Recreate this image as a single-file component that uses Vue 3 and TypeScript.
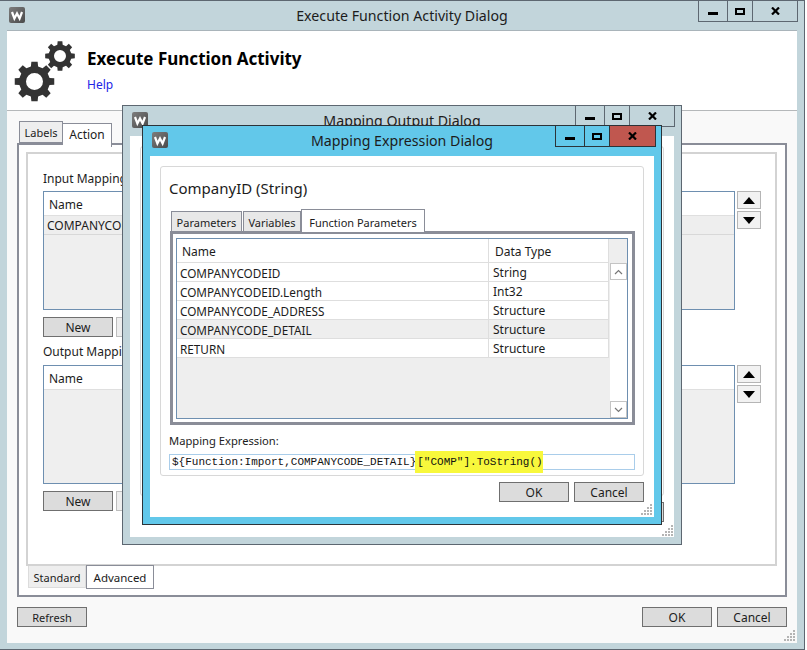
<script setup lang="ts">
function gear(cx: number, cy: number, R: number, root: number, hole: number, teeth: number): string {
  const pts: string[] = []
  const step = (Math.PI * 2) / teeth
  for (let i = 0; i < teeth; i++) {
    const a = -Math.PI / 2 + i * step
    const w = step * 0.2
    const wr = step * 0.3
    const list: [number, number][] = [
      [root, a - wr],
      [R, a - w],
      [R, a + w],
      [root, a + wr],
    ]
    for (const [r, t] of list) {
      pts.push(`${(cx + r * Math.cos(t)).toFixed(2)} ${(cy + r * Math.sin(t)).toFixed(2)}`)
    }
  }
  const ring = `M${pts.join('L')}Z`
  const h = `M${cx - hole} ${cy}a${hole} ${hole} 0 1 0 ${hole * 2} 0a${hole} ${hole} 0 1 0 ${-hole * 2} 0Z`
  return ring + h
}

const bigGear = gear(27.5, 50.5, 20, 15.5, 8.5, 8)
const smallGear = gear(53, 25, 15, 11.5, 6, 8)

const gripDots: { x: number; y: number }[] = []
for (let row = 0; row < 4; row++) {
  for (let col = 3 - row; col < 4; col++) {
    gripDots.push({ x: col * 3, y: row * 3 })
  }
}

const paramRows = [
  { name: 'COMPANYCODEID', type: 'String', on: false },
  { name: 'COMPANYCODEID.Length', type: 'Int32', on: false },
  { name: 'COMPANYCODE_ADDRESS', type: 'Structure', on: false },
  { name: 'COMPANYCODE_DETAIL', type: 'Structure', on: true },
  { name: 'RETURN', type: 'Structure', on: false },
]
</script>

<template>
  <div class="win main">
    <div class="titlebar">
      <svg class="logo" width="16" height="16" viewBox="0 0 16 16"><defs><linearGradient id="lg" x1="0" y1="0" x2="1" y2="1"><stop offset="0" stop-color="#7d7d7d" /><stop offset="1" stop-color="#4a4a4a" /></linearGradient></defs><rect width="16" height="16" rx="2" fill="url(#lg)" /><polyline points="3,5 5.4,11.5 8,6.5 10.6,11.5 13,5" fill="none" stroke="#fff" stroke-width="2.2" /></svg>
      <div class="wintitle">Execute Function Activity Dialog</div>
      <div class="caption">
        <div class="cap w29"><svg class="gmin" width="10" height="3"><rect width="10" height="3" /></svg></div>
        <div class="cap w25"><svg class="gmax" width="10" height="7"><rect x="1" y="1" width="8" height="5" fill="none" stroke="#000" stroke-width="2" /></svg></div>
        <div class="cap w46"><svg width="9" height="8"><path d="M1 0.5L8 7.5M8 0.5L1 7.5" stroke="#000" stroke-width="2.2" fill="none" /></svg></div>
      </div>
    </div>
    <div class="client main-client">
      <header class="head">
        <svg class="gears" width="80" height="79" viewBox="0 0 80 79"><path :d="bigGear" fill="#333" fill-rule="evenodd" /><path :d="smallGear" fill="#333" fill-rule="evenodd" /></svg>
        <div>
          <div class="h1">Execute Function Activity</div>
          <a class="help">Help</a>
        </div>
      </header>
      <div class="body">
        <div class="tabs top-tabs">
          <div class="tab labels">Labels</div>
          <div class="tab action">Action</div>
        </div>
        <div class="outer">
          <div class="inner">
            <div class="lbl first">Input Mapping</div>
            <div class="grid-row">
              <div class="list">
                <div class="list-head">Name</div>
                <div class="list-row">COMPANYCODEID</div>
              </div>
              <div class="updown">
                <div class="ud"><svg width="12" height="7"><path d="M6 0L12 7H0Z" /></svg></div>
                <div class="ud"><svg width="12" height="7"><path d="M0 0H12L6 7Z" /></svg></div>
              </div>
            </div>
            <div class="btns"><div class="btn">New</div><div class="btn off"></div></div>
            <div class="lbl second">Output Mapping</div>
            <div class="grid-row">
              <div class="list">
                <div class="list-head">Name</div>
              </div>
              <div class="updown">
                <div class="ud"><svg width="12" height="7"><path d="M6 0L12 7H0Z" /></svg></div>
                <div class="ud"><svg width="12" height="7"><path d="M0 0H12L6 7Z" /></svg></div>
              </div>
            </div>
            <div class="btns"><div class="btn">New</div><div class="btn off"></div></div>
          </div>
          <div class="tabs bottom-tabs">
            <div class="btab standard">Standard</div>
            <div class="btab advanced">Advanced</div>
          </div>
        </div>
        <div class="footer">
          <div class="btn refresh">Refresh</div>
          <div class="footer-right"><div class="btn">OK</div><div class="btn">Cancel</div></div>
        </div>
      </div>
    </div>
    <svg class="grip grip-main" width="12" height="12"><rect v-for="(d, i) in gripDots" :key="i" :x="d.x" :y="d.y" width="2" height="2" /></svg>

    <div class="win back">
      <div class="titlebar">
        <svg class="logo" width="16" height="16" viewBox="0 0 16 16"><rect width="16" height="16" rx="2" fill="url(#lg)" /><polyline points="3,5 5.4,11.5 8,6.5 10.6,11.5 13,5" fill="none" stroke="#fff" stroke-width="2.2" /></svg>
        <div class="wintitle">Mapping Output Dialog</div>
        <div class="caption">
          <div class="cap w29"><svg class="gmin" width="10" height="3"><rect width="10" height="3" /></svg></div>
          <div class="cap w25"><svg class="gmax" width="10" height="7"><rect x="1" y="1" width="8" height="5" fill="none" stroke="#000" stroke-width="2" /></svg></div>
          <div class="cap w46"><svg width="9" height="8"><path d="M1 0.5L8 7.5M8 0.5L1 7.5" stroke="#000" stroke-width="2.2" fill="none" /></svg></div>
        </div>
      </div>
      <div class="client back-client">
        <div class="group back-group"></div>
        <div class="back-btn"><div class="btn"></div></div>
      </div>
      <svg class="grip grip-back" width="12" height="12"><rect v-for="(d, i) in gripDots" :key="i" :x="d.x" :y="d.y" width="2" height="2" /></svg>
    </div>

    <div class="win front">
      <div class="titlebar">
        <svg class="logo" width="16" height="16" viewBox="0 0 16 16"><rect width="16" height="16" rx="2" fill="url(#lg)" /><polyline points="3,5 5.4,11.5 8,6.5 10.6,11.5 13,5" fill="none" stroke="#fff" stroke-width="2.2" /></svg>
        <div class="wintitle">Mapping Expression Dialog</div>
        <div class="caption">
          <div class="cap w29"><svg class="gmin" width="10" height="3"><rect width="10" height="3" /></svg></div>
          <div class="cap w25"><svg class="gmax" width="10" height="7"><rect x="1" y="1" width="8" height="5" fill="none" stroke="#000" stroke-width="2" /></svg></div>
          <div class="cap w46 red"><svg width="9" height="8"><path d="M1 0.5L8 7.5M8 0.5L1 7.5" stroke="#000" stroke-width="2.2" fill="none" /></svg></div>
        </div>
      </div>
      <div class="client front-client">
        <div class="group">
          <div class="gtitle">CompanyID (String)</div>
          <div class="tabs ptabs">
            <div class="ptab tp">Parameters</div>
            <div class="ptab tv">Variables</div>
            <div class="ptab sel">Function Parameters</div>
          </div>
          <div class="ppanel">
            <div class="pgrid">
              <div class="pcols">
                <div class="phead">
                  <div class="pc1 hname">Name</div>
                  <div class="pc2 htype">Data Type</div>
                </div>
                <div v-for="r in paramRows" :key="r.name" class="prow" :class="{ on: r.on }">
                  <div class="pc1 cname">{{ r.name }}</div>
                  <div class="pc2 ctype">{{ r.type }}</div>
                </div>
              </div>
              <div class="sbar">
                <div class="sb"><svg width="9" height="6"><path d="M1 5L4.5 1.5L8 5" fill="none" stroke="#777" stroke-width="1.2" /></svg></div>
                <div class="sb"><svg width="9" height="6"><path d="M1 1L4.5 4.5L8 1" fill="none" stroke="#777" stroke-width="1.2" /></svg></div>
              </div>
            </div>
          </div>
          <div class="mlabel">Mapping Expression:</div>
          <div class="expr"><span>${Function:Import,COMPANYCODE_DETAIL}</span><span class="hl">["COMP"].ToString()</span></div>
        </div>
        <div class="front-btns"><div class="btn">OK</div><div class="btn">Cancel</div></div>
      </div>
      <svg class="grip grip-front" width="12" height="12"><rect v-for="(d, i) in gripDots" :key="i" :x="d.x" :y="d.y" width="2" height="2" /></svg>
    </div>
  </div>
</template>

<style scoped>
.win {
  box-sizing: border-box;
  font-family: "Noto Sans", "Open Sans", sans-serif;
  font-size: 12px;
  color: #1c1c1c;
  display: flex;
  flex-direction: column;
}
.main {
  position: relative;
  width: 805px;
  height: 650px;
  background: #c2d5db;
  border-top: 1px solid #5d6771;
  border-right: 1px solid #5d6771;
  border-bottom: 1px solid #5d6771;
}
.back,
.front {
  position: absolute;
  border: 1px solid #5d6771;
}
.back {
  left: 122px;
  top: 104px;
  width: 560px;
  height: 440px;
  background: #c2d5db;
}
.front {
  left: 142px;
  top: 124px;
  width: 520px;
  height: 400px;
  background: #62c8ea;
  border-color: #2c3338;
}
.titlebar {
  display: grid;
  grid-template-columns: 1fr auto 1fr;
  height: 29px;
  flex: none;
}
.logo {
  margin: 6px 0 0 9px;
}
.wintitle {
  font-size: 14.2px;
  line-height: 18px;
  padding-top: 6px;
  white-space: nowrap;
}
.caption {
  display: flex;
  justify-self: end;
  height: 20px;
  margin-right: 6px;
  border-left: 1px solid #5d6771;
  border-bottom: 1px solid #5d6771;
  border-right: 1px solid #5d6771;
}
.front .caption {
  margin-right: 5px;
  border-color: #2c3338;
}
.cap {
  display: flex;
  align-items: center;
  justify-content: center;
  border-right: 1px solid #5d6771;
  box-sizing: border-box;
}
.front .cap {
  border-color: #2c3338;
}
.cap:last-child {
  border-right: 0;
}
.gmin {
  margin-top: 4px;
}
.gmax {
  margin-top: 1px;
}
.w29 {
  width: 29px;
}
.w25 {
  width: 25px;
}
.w46 {
  width: 44px;
}
.front .w46 {
  width: 45px;
}
.red {
  background: #c0574f;
}
.client {
  background: #fff;
  flex: 1;
  min-height: 0;
  display: flex;
  flex-direction: column;
}
.main-client {
  margin: 0 7px 6px 7px;
  border-top: 1px solid #a9b4ba;
}
.head {
  height: 79px;
  flex: none;
  display: flex;
  border-bottom: 1px solid #b5b8ba;
  background: #fff;
}
.gears {
  flex: none;
}
.h1 {
  font-size: 17px;
  font-weight: 700;
  line-height: 24px;
  margin-top: 16px;
  color: #000;
}
.help {
  display: block;
  font-size: 12px;
  line-height: 16px;
  margin-top: 6px;
  color: #2323e6;
}
.body {
  flex: 1;
  background: #f9f9f9;
  padding: 10px 10px 15px;
  display: flex;
  flex-direction: column;
}
.tabs {
  display: flex;
}
.top-tabs {
  height: 22px;
  padding-left: 2px;
  align-items: flex-start;
  position: relative;
  z-index: 1;
}
.tab {
  box-sizing: border-box;
  border: 1px solid #8a8d98;
  text-align: center;
}
.labels {
  width: 44px;
  height: 22px;
  line-height: 22px;
  font-size: 11px;
  background: #eeeeee;
  margin-top: 0;
}
.action {
  width: 49px;
  height: 24px;
  margin-top: 2px;
  line-height: 22px;
  background: #fff;
  border-bottom: 0;
  border-left-width: 0;
}
.outer {
  box-sizing: border-box;
  height: 454px;
  border: 2px solid #8a8d98;
  background: #fff;
  padding: 7px 8px 0 7px;
  display: flex;
  flex-direction: column;
}
.inner {
  box-sizing: border-box;
  height: 414px;
  flex: none;
  border: 2px solid #d3d3d3;
  padding: 0 0 0 15px;
}
.lbl {
  line-height: 20px;
  white-space: nowrap;
}
.first {
  padding-top: 15px;
  padding-bottom: 2px;
}
.second {
  padding-top: 5px;
  height: 23px;
}
.grid-row {
  display: flex;
  gap: 2px;
}
.list {
  box-sizing: border-box;
  width: 692px;
  height: 119px;
  border: 1px solid #6e8fb0;
  background: #efefef;
}
.list-head {
  height: 24px;
  box-sizing: border-box;
  line-height: 25px;
  padding-left: 5px;
  background: #fff;
  border-bottom: 1px solid #dfdfdf;
}
.list-row {
  height: 19px;
  box-sizing: border-box;
  line-height: 20px;
  padding-left: 3px;
  background: #eeeeee;
  border-bottom: 1px solid #d8d8d8;
}
.updown {
  display: flex;
  flex-direction: column;
  gap: 2px;
}
.ud {
  box-sizing: border-box;
  width: 24px;
  height: 18px;
  border: 1px solid #b5b5b5;
  background: #f2f2f2;
  display: flex;
  align-items: center;
  justify-content: center;
}
.btns {
  display: flex;
  gap: 3px;
  margin-top: 7px;
}
.btn {
  box-sizing: border-box;
  width: 70px;
  height: 20px;
  border: 1px solid #6f6f6f;
  background: #dcdcdc;
  line-height: 20px;
  text-align: center;
}
.btn.off {
  border-color: #bdbdbd;
  background: #eeeeee;
}
.refresh {
  font-size: 11px;
}
.bottom-tabs {
  padding-left: 2px;
  align-items: flex-start;
  margin-top: -1px;
  position: relative;
}
.btab {
  box-sizing: border-box;
  text-align: center;
}
.standard {
  width: 58px;
  height: 22px;
  margin-top: 1px;
  line-height: 23px;
  font-size: 11px;
  background: #eeeeee;
  border: 1px solid #dcdcdc;
  border-top: 0;
}
.advanced {
  width: 68px;
  height: 24px;
  line-height: 24px;
  font-size: 11.5px;
  background: #fff;
  border: 1px solid #8a8d98;
}
.footer {
  display: flex;
  justify-content: space-between;
  margin-top: 10px;
}
.footer-right {
  display: flex;
  gap: 5px;
}
.grip {
  position: absolute;
  fill: #b4b4b4;
}
.grip-main {
  right: 8px;
  bottom: 7px;
}
.grip-back {
  right: 7px;
  bottom: 7px;
}
.grip-front {
  right: 8px;
  bottom: 8px;
}
.back-client {
  margin: 1px 7px 7px;
  padding: 10px 10px 0;
}
.group {
  box-sizing: border-box;
  width: 484px;
  height: 310px;
  border: 1px solid #d8d8d8;
  border-radius: 3px;
  background: #fff;
}
.back-group {
  width: 100%;
  height: 350px;
}
.back-btn {
  display: flex;
  justify-content: flex-end;
  margin-top: 6px;
}
.front-client {
  margin: 1px 7px 7px;
  padding: 10px 10px 0;
}
.gtitle {
  font-size: 15px;
  line-height: 20px;
  padding: 11px 0 1px 8px;
}
.ptabs {
  align-items: flex-end;
  height: 22px;
  margin-top: 10px;
  padding-left: 10px;
  position: relative;
  z-index: 1;
}
.ptab {
  box-sizing: border-box;
  height: 20px;
  line-height: 21px;
  font-size: 11px;
  text-align: center;
  background: #e8e8e8;
  border: 1px solid #8a8d98;
  border-bottom: 0;
  white-space: nowrap;
}
.tp {
  width: 71px;
  margin-right: 1px;
}
.tv {
  width: 58px;
}
.ptab.sel {
  width: 124px;
  background: #fff;
  height: 23px;
  line-height: 25px;
  margin-bottom: -1px;
}
.ppanel {
  box-sizing: border-box;
  width: 465px;
  height: 194px;
  margin-left: 9px;
  border: 3px solid #8a8d98;
  padding: 4px 4px 3px 3px;
  background: #fff;
}
.pgrid {
  box-sizing: border-box;
  height: 100%;
  border: 1px solid #6e8fb0;
  background: #eeeeee;
  display: flex;
  align-items: stretch;
}
.pcols {
  width: 432px;
  flex: none;
}
.phead,
.prow {
  display: flex;
  box-sizing: border-box;
  border-bottom: 1px solid #dedede;
}
.phead {
  height: 24px;
  line-height: 25px;
  background: #fff;
}
.prow {
  height: 19px;
  line-height: 20px;
  background: #fff;
}
.prow.on {
  background: #eeeeee;
}
.pc1 {
  box-sizing: border-box;
  width: 312px;
  border-right: 1px solid #dedede;
}
.pc2 {
  box-sizing: border-box;
  width: 120px;
  border-right: 1px solid #dedede;
}
.hname {
  padding-left: 5px;
}
.htype {
  padding-left: 6px;
}
.cname {
  padding-left: 3px;
  font-size: 11.75px;
}
.ctype {
  padding-left: 4px;
}
.sbar {
  flex: 1;
  margin-top: 24px;
  margin-left: 1px;
  background: #fff;
  display: flex;
  flex-direction: column;
  justify-content: space-between;
}
.sb {
  box-sizing: border-box;
  height: 17px;
  border: 1px solid #c4c4c4;
  display: flex;
  align-items: center;
  justify-content: center;
}
.mlabel {
  line-height: 16px;
  padding: 8px 0 0 8px;
  font-size: 11.2px;
}
.expr {
  box-sizing: border-box;
  width: 466px;
  height: 16px;
  margin: 5px 0 0 8px;
  border: 1px solid #a9cdea;
  padding-left: 2px;
  display: flex;
  align-items: center;
  font-family: "Liberation Mono", "DejaVu Sans Mono", monospace;
  font-size: 11px;
  color: #111;
  white-space: pre;
}
.hl {
  flex: none;
  height: 22px;
  line-height: 22px;
  width: 128px;
  margin-left: -1px;
  padding-left: 2px;
  box-sizing: border-box;
  background: #f8f83c;
}
.front-btns {
  display: flex;
  justify-content: flex-end;
  gap: 5px;
  margin-top: 6px;
}
</style>
